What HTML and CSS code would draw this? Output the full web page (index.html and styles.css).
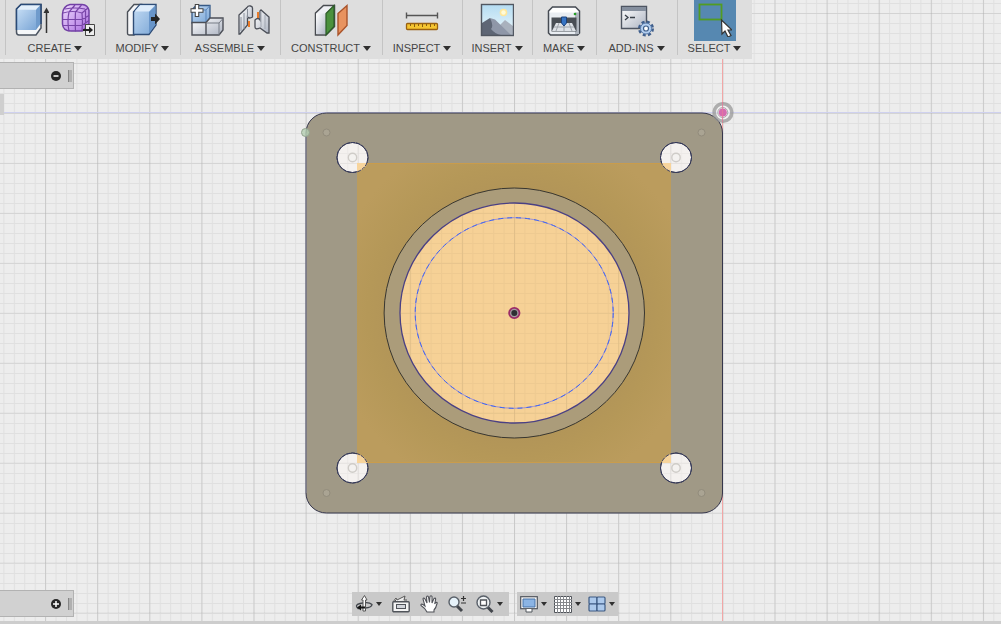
FILE: index.html
```html
<!DOCTYPE html>
<html lang="en">
<head>
<meta charset="utf-8">
<title>Model workspace</title>
<link rel="stylesheet" href="styles.css">
</head>
<body>
<div class="app">
  <svg class="viewport" viewBox="0 0 1001 624" preserveAspectRatio="xMidYMid slice" role="img" aria-label="Mounting plate, top view">
    <defs>
      <pattern id="minor" x="514" y="313" width="10.42" height="10" patternUnits="userSpaceOnUse">
        <path d="M0 0.5H10.42M0.5 0V10" stroke="#000" stroke-opacity=".055" fill="none"/>
      </pattern>
      <pattern id="major" x="514" y="312.7" width="52.1" height="49.95" patternUnits="userSpaceOnUse">
        <path d="M0 .5H52.1" stroke="#000" stroke-opacity=".06" fill="none"/>
        <path d="M.5 0V50" stroke="#000" stroke-opacity=".1" fill="none"/>
      </pattern>
      <radialGradient id="shade" gradientUnits="userSpaceOnUse" cx="514" cy="313" r="215">
        <stop offset=".58" stop-color="#b29558"/>
        <stop offset=".68" stop-color="#b59858"/>
        <stop offset=".86" stop-color="#bb9c5d"/>
      </radialGradient>
      <linearGradient id="blue" x2="1" y2="1"><stop stop-color="#c4dcf4"/><stop offset="1" stop-color="#7ba6d6"/></linearGradient>
      <linearGradient id="steel" x2="1" y2="1"><stop stop-color="#fff"/><stop offset="1" stop-color="#adb4c2"/></linearGradient>
      <linearGradient id="sky" x2="0" y2="1"><stop stop-color="#b4dcf2"/><stop offset="1" stop-color="#eef8fb"/></linearGradient>
      <linearGradient id="violet" x2="1" y2="1"><stop stop-color="#f0dcff"/><stop offset="1" stop-color="#a96bdf"/></linearGradient>
    </defs>
    <rect width="1001" height="624" fill="#ededed"/>
    <rect width="1001" height="624" fill="url(#minor)"/>
    <rect width="1001" height="624" fill="url(#major)"/>
    <path d="M0 112.5H1001" stroke="#cfd1ef"/>
    <path d="M722.5 0V624" stroke="#f2a6a6"/>
    <g fill="#fff8f2" fill-opacity=".4">
      <ellipse cx="352.5" cy="157.500" rx="15.500" ry="15"/><ellipse cx="676" cy="157.500" rx="15.500" ry="15"/>
      <ellipse cx="352.5" cy="468" rx="15.500" ry="15"/><ellipse cx="676" cy="468" rx="15.500" ry="15"/>
    </g>
    <path fill="#a09986" fill-rule="evenodd" stroke="#35364c" stroke-width="1" d="M326.500 113H702a20.500 20 0 0 1 20.500 20V493a20.500 20 0 0 1-20.500 20H326.500a20.500 20 0 0 1-20.500-20V133a20.500 20 0 0 1 20.500-20z
      M337 157.500a15.500 15 0 1 0 31 0a15.500 15 0 1 0-31 0z M660.500 157.500a15.500 15 0 1 0 31 0a15.500 15 0 1 0-31 0z
      M337 468a15.500 15 0 1 0 31 0a15.500 15 0 1 0-31 0z M660.500 468a15.500 15 0 1 0 31 0a15.500 15 0 1 0-31 0z"/>
    <path d="M306 133V493" stroke="#8f8fa0"/>
    <rect x="357" y="163" width="314" height="300" fill="url(#shade)"/>
    <path d="M357 163.500H671M357 462.500H671" stroke="#c99c4c"/>
    <g fill="#f7d49c">
      <path d="M357 163H367.500A15.500 15 0 0 1 357 172z"/><path d="M671 163H661.500A15.500 15 0 0 0 671 172z"/>
      <path d="M357 463H367.500A15.500 15 0 0 0 357 453.500z"/><path d="M671 463H661.500A15.500 15 0 0 1 671 453.500z"/>
    </g>
    <g fill="none" stroke="#34395c" stroke-dasharray="4 1">
      <ellipse cx="352.5" cy="157.500" rx="15.500" ry="15"/><ellipse cx="676" cy="157.500" rx="15.500" ry="15"/>
      <ellipse cx="352.5" cy="468" rx="15.500" ry="15"/><ellipse cx="676" cy="468" rx="15.500" ry="15"/>
    </g>
    <g fill="#f4f2f0" stroke="#cfccc8" stroke-width="1.400">
      <circle cx="352.500" cy="157.500" r="4.200"/><circle cx="676" cy="157.500" r="4.200"/><circle cx="352.500" cy="468" r="4.200"/><circle cx="676" cy="468" r="4.200"/>
    </g>
    <g fill="#aaa493" stroke="#928c7c">
      <circle cx="326.500" cy="132.500" r="3.500"/><circle cx="701.500" cy="132.500" r="3.500"/><circle cx="326.500" cy="493" r="3.500"/><circle cx="701.500" cy="493" r="3.500"/>
    </g>
    <circle cx="305.500" cy="132.500" r="4" fill="#b4ceb1" fill-opacity=".8" stroke="#93a490"/>
    <ellipse cx="514.300" cy="313" rx="130.200" ry="125" fill="#ab9c7a" stroke="#383630"/>
    <ellipse cx="514.500" cy="313" rx="114.500" ry="110" fill="#f6d196"/>
    <g opacity=".55">
      <ellipse cx="514.500" cy="313" rx="114" ry="109.500" fill="url(#minor)"/>
      <ellipse cx="514.500" cy="313" rx="114" ry="109.500" fill="url(#major)"/>
    </g>
    <ellipse cx="514.500" cy="313" rx="114.500" ry="110" fill="none" stroke="#4a4084" stroke-width="1.300"/>
    <ellipse cx="514.200" cy="313" rx="99" ry="95.300" fill="none" stroke="#9d90d0"/>
    <ellipse cx="514.200" cy="313" rx="99" ry="95.300" fill="none" stroke="#3f66f0" stroke-dasharray="5 4"/>
    <circle cx="514.300" cy="313" r="5.200" fill="#a49ca0" stroke="#9b2c68" stroke-width="1.800"/>
    <circle cx="514.300" cy="313" r="3" fill="#2e2f33"/>
    <circle cx="723" cy="112.500" r="8.800" fill="#fff" fill-opacity=".35" stroke="#929292" stroke-opacity=".7" stroke-width="3.600"/>
    <circle cx="722.800" cy="112.500" r="5" fill="none" stroke="#a8a8a8"/>
    <circle cx="722.800" cy="112.500" r="4" fill="#d66cae"/>
    <path d="M722.500 102V122" stroke="#e8799a" stroke-opacity=".7"/>
  </svg>

  <header class="toolbar">
    <div class="group">
      <div class="icons">
        <button class="tool" aria-label="Extrude"><svg viewBox="0 0 34 34"><path d="M1.500 6 6 1.500H26V25l-5 7H4q-2.500 0-2.500-3z" fill="#f5f7f9" stroke="#4c5562" stroke-width="1.500"/><path d="M2 6.500H21V27H2z" fill="url(#blue)"/><path d="M2 6 6 2H25L21 6.500z" fill="#e4f0fb"/><path d="M21 6.500 25.500 2V21L21 27z" fill="#6f9bcc"/><path d="M1.500 27V6L6 1.500H26V21" fill="none" stroke="#2b4b78" stroke-width="1.500"/><path d="M31.500 30V7" stroke="#333" stroke-width="1.500"/><path d="M31.500 4.500 28.500 10h6z" fill="#333"/></svg></button>
        <button class="tool" aria-label="Create form"><svg viewBox="0 0 34 34"><path d="M1.500 11Q2 3 9 1.500h12q6 .5 7 6v13q-1 4-7 7.500H10Q2 28 1.500 21z" fill="url(#violet)" stroke="#7240a5" stroke-width="1.500"/><path d="M2 10q10-3 19 0 1 9 0 18M21 10l6-5M2 16.500h19l7-4M2 22.500h19l7-5M8 28.500Q6 18 8 9l6-7M14.500 28.500Q14 17 14.500 9l6-7M4 6q10-2 20 0M24.500 6v20" fill="none" stroke="#7845a8" stroke-width="1.200"/><path d="M24.500 21.500h9v11h-9z" fill="#eee" stroke="#444"/><path d="M22 27h7" stroke="#222" stroke-width="2"/><path d="m28 23.500 4 3.500-4 3.500z" fill="#222"/></svg></button>
      </div>
      <button class="menu">CREATE</button>
    </div>
    <div class="group">
      <div class="icons"><button class="tool" aria-label="Press pull"><svg viewBox="0 0 34 34"><path d="M1.500 9 8 1.500h7L8 9v23H3.500q-2 0-2-2z" fill="#f5f6f8" stroke="#4b5058" stroke-width="1.400"/><path d="M7.500 9 14 1.500H30V22l-7 9.500H7.500z" fill="url(#blue)" stroke="#2f4d77" stroke-width="1.400"/><path d="M8.500 8.500 14 2.300H29L23 8.500z" fill="#deecfb"/><path d="M23 9 29.500 2.500v19L23 30.500z" fill="#6895c9"/><path d="M25 14h4v-3.500l5 5.500-5 5.500V18h-4z" fill="#252525"/></svg></button></div>
      <button class="menu">MODIFY</button>
    </div>
    <div class="group">
      <div class="icons">
        <button class="tool" aria-label="New component"><svg viewBox="0 0 34 34"><path d="M2 7 6 2.500H20V15l-4 5H2z" fill="url(#blue)" stroke="#365985" stroke-width="1.300"/><path d="M16 7v12M3 7h13l4-4.500" fill="none" stroke="#5b87bd"/><path d="M2 19.500h14V32H2zM16 19.500l4-4.500h13v12l-4 5H16z" fill="url(#steel)" stroke="#4c4f57" stroke-width="1.400"/><path d="M16.500 20H29l4-4.500M29 20v12" fill="none" stroke="#777c86"/><path d="M7 1v13M.5 7.500h13" stroke="#444" stroke-width="4.500"/><path d="M7 2v11M1.500 7.500h11" stroke="#fff" stroke-width="2.400"/></svg></button>
        <button class="tool" aria-label="Joint"><svg viewBox="0 0 34 34"><path d="m3 12 8-7.500q1-2 3.500-1.500 2 .5 2 2v9q-3 2-5 0v8L4 31H3z" fill="url(#steel)" stroke="#4b4f58" stroke-width="1.300"/><path d="M5 14v14M8 10v16M11.500 6v9" stroke="#8a909b" fill="none"/><path d="M13 18v6M22 9v9" stroke="#e97a28" stroke-width="2"/><path d="M19 17q3-3 5 0V8l1-1 8 7v16h-2l-7-5q-5 2-5-1z" fill="url(#steel)" stroke="#4b4f58" stroke-width="1.300"/><path d="M25 8v16M29 12v14" stroke="#a0a6b0"/></svg></button>
      </div>
      <button class="menu">ASSEMBLE</button>
    </div>
    <div class="group">
      <div class="icons"><button class="tool" aria-label="Offset plane"><svg viewBox="0 0 34 34"><path d="m1.500 10 8-7.500h11v21L12 32H1.500z" fill="#eff0f4" stroke="#484b50" stroke-width="1.500"/><path d="M2 10.500h10V31H2z" fill="url(#steel)"/><path d="m12 10.500 8-8v21L12 32z" fill="#4b913d" stroke="#2c5c28" stroke-width="1.200"/><path d="m24 10.500 9-8v20l-9 9.500z" fill="#e8935f" stroke="#aa542b" stroke-width="1.400"/></svg></button></div>
      <button class="menu">CONSTRUCT</button>
    </div>
    <div class="group">
      <div class="icons"><button class="tool" aria-label="Measure"><svg viewBox="0 0 34 34"><path d="M1.500 12.500h31M1.500 9.500v6M32.500 9.500v6" stroke="#555" stroke-width="1.400"/><rect x="1.500" y="20.500" width="31" height="6" rx="1" fill="#f5c531" stroke="#9a6110" stroke-width="1.300"/><path d="M5.500 21v2M9.500 21v3M13.500 21v2M17.500 21v3M21.500 21v2M25.500 21v3M29.500 21v2" stroke="#8a5d10"/></svg></button></div>
      <button class="menu">INSPECT</button>
    </div>
    <div class="group">
      <div class="icons"><button class="tool" aria-label="Insert image"><svg viewBox="0 0 34 34"><rect x="1.500" y="1.500" width="32" height="31" fill="url(#sky)"/><circle cx="23.500" cy="9.500" r="3.800" fill="#ffe79c"/><circle cx="23.500" cy="9.500" r="2.200" fill="#fffbd8"/><path d="m18 24 7-7 8 6v10H18z" fill="#a9b1bd"/><path d="m2 20 8-5 17 17H2z" fill="#5e6675"/><path d="m10 15 5 1.500L31 32H21q-6-1-10-6 3-3-1-11z" fill="#8f97a8"/><rect x="1.500" y="1.500" width="32" height="31" fill="none" stroke="#515761" stroke-width="1.400"/></svg></button></div>
      <button class="menu">INSERT</button>
    </div>
    <div class="group">
      <div class="icons"><button class="tool" aria-label="3D print"><svg viewBox="0 0 34 34"><path d="m1.500 8 4-4h23l4 4v22l-2 2h-27l-2-2z" fill="#e9edf2" stroke="#464b53" stroke-width="1.500"/><path d="M2 9.500h30L28 5H6z" fill="#fff"/><path d="M28 9.500h4V31h-4z" fill="#afb5be"/><path d="M4.500 14.500h25v14h-25z" fill="#494e55"/><path d="m9 20-4 8h24l-4-8z" fill="#dde1e6"/><path d="m12 20-3 8M17 20v8M22 20l3 8M7 24h20" stroke="#9da3aa"/><path d="M14.500 14h5v6L17 23l-2.500-3z" fill="#3775c5" stroke="#1c427c"/><circle cx="28" cy="11" r="1.300" fill="#25a025"/></svg></button></div>
      <button class="menu">MAKE</button>
    </div>
    <div class="group">
      <div class="icons"><button class="tool" aria-label="Scripts and add-ins"><svg viewBox="0 0 34 34"><path d="M1.500 3.500h25v22h-25z" fill="url(#steel)" stroke="#4e5562" stroke-width="1.400"/><path d="M2 4h24v4H2z" fill="#858f9e"/><path d="m5 12 3 2.500L5 17M10 14.500h5" fill="none" stroke="#39404a" stroke-width="1.300"/><circle cx="26" cy="25.500" r="6.500" fill="none" stroke="#405f8c" stroke-width="3" stroke-dasharray="2.900 2.205"/><circle cx="26" cy="25.500" r="5.500" fill="#b4cff0" stroke="#5a7dac"/><circle cx="26" cy="25.500" r="2.500" fill="#fff" stroke="#3f5f8a" stroke-width="1.200"/></svg></button></div>
      <button class="menu">ADD-INS</button>
    </div>
    <div class="group">
      <div class="icons"><button class="tool selected" aria-label="Select" aria-pressed="true"><svg viewBox="0 0 34 34"><rect x="1.500" y="1.500" width="22" height="15" fill="none" stroke="#529c22" stroke-width="1.800"/><path d="m23.500 17 .5 14 3-3 3 6 3-1.500-3-5.500h4z" fill="#fff" stroke="#343434" stroke-width="1.200"/></svg></button></div>
      <button class="menu">SELECT</button>
    </div>
  </header>

  <main class="workspace">
    <section class="panel" aria-label="Browser">
      <button class="toggle" aria-label="Collapse browser"><svg viewBox="0 0 10 10"><circle cx="5" cy="5" r="5" fill="#262626"/><path d="M2.500 5h5" stroke="#fff" stroke-width="1.500"/></svg></button>
      <span class="grip"></span>
    </section>
    <div class="tab"></div>
  </main>

  <footer class="bottom">
    <section class="panel" aria-label="Comments">
      <button class="toggle" aria-label="Expand comments"><svg viewBox="0 0 10 10"><circle cx="5" cy="5" r="5" fill="#262626"/><path d="M2 5h6M5 2v6" stroke="#fff" stroke-width="1.500"/></svg></button>
      <span class="grip"></span>
    </section>
    <div class="navs">
      <nav class="nav" aria-label="Navigation">
        <button class="nav-button drop" aria-label="Orbit"><svg viewBox="0 0 18 18"><path d="M4 13.500h-1Q-1 10 5 8.500q9-2 12 1 0 3-7 3.500" fill="none" stroke="#42464c" stroke-width="1.300"/><path d="M8 16V5H6.500L9.500.500 12 5h-1.500v11z" fill="#fff" stroke="#555"/><path d="m2 12.500 4-3v2h4v2H6v2z" fill="#151515"/></svg></button>
        <button class="nav-button" aria-label="Look at"><svg viewBox="0 0 18 18"><path d="m1 7 3-4 1 2 8-4-1 4h3M4 5l-2 2" fill="#eee" stroke="#555"/><rect x=".8" y="6.800" width="16.400" height="10" rx="1" fill="#f4f4f4" stroke="#50545a" stroke-width="1.400"/><rect x="4.500" y="9.500" width="9" height="4" fill="#d3d6dc" stroke="#50545a"/></svg></button>
        <button class="nav-button" aria-label="Pan"><svg viewBox="0 0 18 18"><path d="M7 17q-2-4-6-6.500-.5-2 2-1l2 1.500-2-7q.5-2 2 0l2 4L6.500 2q1-2 2 0l1 5.500L10 1.500q1-1.500 2 0V8l2-4.500q1.500-1 1.700.5l-1 5 1-1.500q1.500-.5 1.500.5Q16 13 14 15v2z" fill="#fff" stroke="#505258" stroke-width="1.100"/></svg></button>
        <button class="nav-button" aria-label="Zoom"><svg viewBox="0 0 18 18"><path d="m9 11 5 5" stroke="#42464c" stroke-width="3"/><circle cx="6" cy="7" r="5" fill="#e6f2fa" stroke="#596069" stroke-width="1.400"/><path d="M15.500 1v5M13 3.500h5M13 8h5" stroke="#333" stroke-width="1.200"/></svg></button>
        <button class="nav-button drop" aria-label="Zoom window"><svg viewBox="0 0 18 18"><path d="m11.500 12 5 5" stroke="#42464c" stroke-width="3"/><circle cx="7.500" cy="7.500" r="6.500" fill="#eef1f3" stroke="#596069" stroke-width="1.400"/><path d="M4.500 5h6v5.500h-6z" fill="#fff" stroke="#50545a" stroke-width="1.300"/></svg></button>
      </nav>
      <nav class="nav nav-display" aria-label="Display">
        <button class="nav-button drop" aria-label="Display settings"><svg viewBox="0 0 18 18"><rect x=".7" y="1.700" width="16.600" height="12" fill="#f5f5f5" stroke="#51565d" stroke-width="1.200"/><path d="M3 4h12v8H3z" fill="#8bb4e4" stroke="#4673a8"/><path d="M6 14v3h6v-3" fill="#fff" stroke="#51565d"/></svg></button>
        <button class="nav-button drop" aria-label="Grid and snaps"><svg viewBox="0 0 18 18"><path d="M.5 1.500h17v16H.5z" fill="#fff" stroke="#50545a"/><path d="M3.500 1v17M6.500 1v17M9.500 1v17M12.500 1v17M15.500 1v17M0 4.500h18M0 7.500h18M0 10.500h18M0 13.500h18" stroke="#85888c"/></svg></button>
        <button class="nav-button drop" aria-label="Viewports"><svg viewBox="0 0 18 18"><g fill="#acc9ec" stroke="#3d5a83" stroke-width="1.200"><rect x="1" y="2" width="8" height="7" rx="1"/><rect x="9" y="2" width="8" height="7" rx="1"/><rect x="1" y="9" width="8" height="7" rx="1"/><rect x="9" y="9" width="8" height="7" rx="1"/></g></svg></button>
      </nav>
    </div>
  </footer>
</div>
</body>
</html>
```
FILE: styles.css
```css
* { box-sizing: border-box; }
body { margin: 0; font-family: "Liberation Sans", Arial, sans-serif; font-size: 11px; color: #454545; }
button { border: 0; padding: 0; background: none; font: inherit; color: inherit; cursor: pointer; }
svg { display: block; }

.app { position: relative; display: flex; flex-direction: column; min-height: 100vh; isolation: isolate; overflow: hidden; }
.viewport { position: absolute; inset: 0; z-index: -1; width: 100%; height: 100%; }

.toolbar {
  align-self: flex-start;
  display: grid;
  grid-template-columns: 100px 75px 100px 102px 80px 70px 64px 81px 75px;
  padding-left: 5px;
  background: #dedede;
}
.group { position: relative; display: flex; flex-direction: column; align-items: center; padding-bottom: 3px; }
.group::before { content: ""; position: absolute; left: 0; top: 0; bottom: 4px; width: 1px; background: #c4c4c4; }
.icons { display: flex; gap: 12px; height: 41px; }
.tool { padding: 3px 0 4px; }
.tool svg { width: 34px; height: 34px; }
.selected { padding: 3px 4px 4px; background: #5688b1; }
.menu { display: flex; align-items: center; gap: 3px; height: 15px; line-height: 15px; }
.menu::after, .drop::after { content: ""; border: 3px solid transparent; border-top: 4px solid #303030; border-bottom: 0; }
.menu::after { border-width: 5px 4px 0; }

.workspace { flex: 1; padding-top: 3px; }
.panel {
  display: flex;
  align-items: center;
  justify-content: flex-end;
  gap: 7px;
  width: 74px;
  height: 27px;
  padding-right: 1px;
  background: #d1d1d1;
  border: 1px solid #b2b2b2;
  border-left: 0;
}
.toggle svg { width: 10px; height: 10px; }
.grip { width: 4px; height: 12px; background: #b0b0b0; border-left: 1px solid #858585; }
.tab { width: 4px; height: 21px; margin-top: 5px; background: #cfcfcf; }

.bottom { display: grid; grid-template-columns: 1fr auto 1fr; align-items: center; padding: 0 31px 4px 0; border-bottom: 3px solid #cdcdcd; }
.navs { display: flex; gap: 8px; }
.nav { display: flex; align-items: center; gap: 10px; height: 24px; padding: 0 6px 0 3px; background: #c9c9c9; }
.nav-display { gap: 7px; padding-right: 3px; }
.nav-button { display: flex; align-items: center; gap: 3px; }
.nav-button svg { width: 18px; height: 18px; }
```
